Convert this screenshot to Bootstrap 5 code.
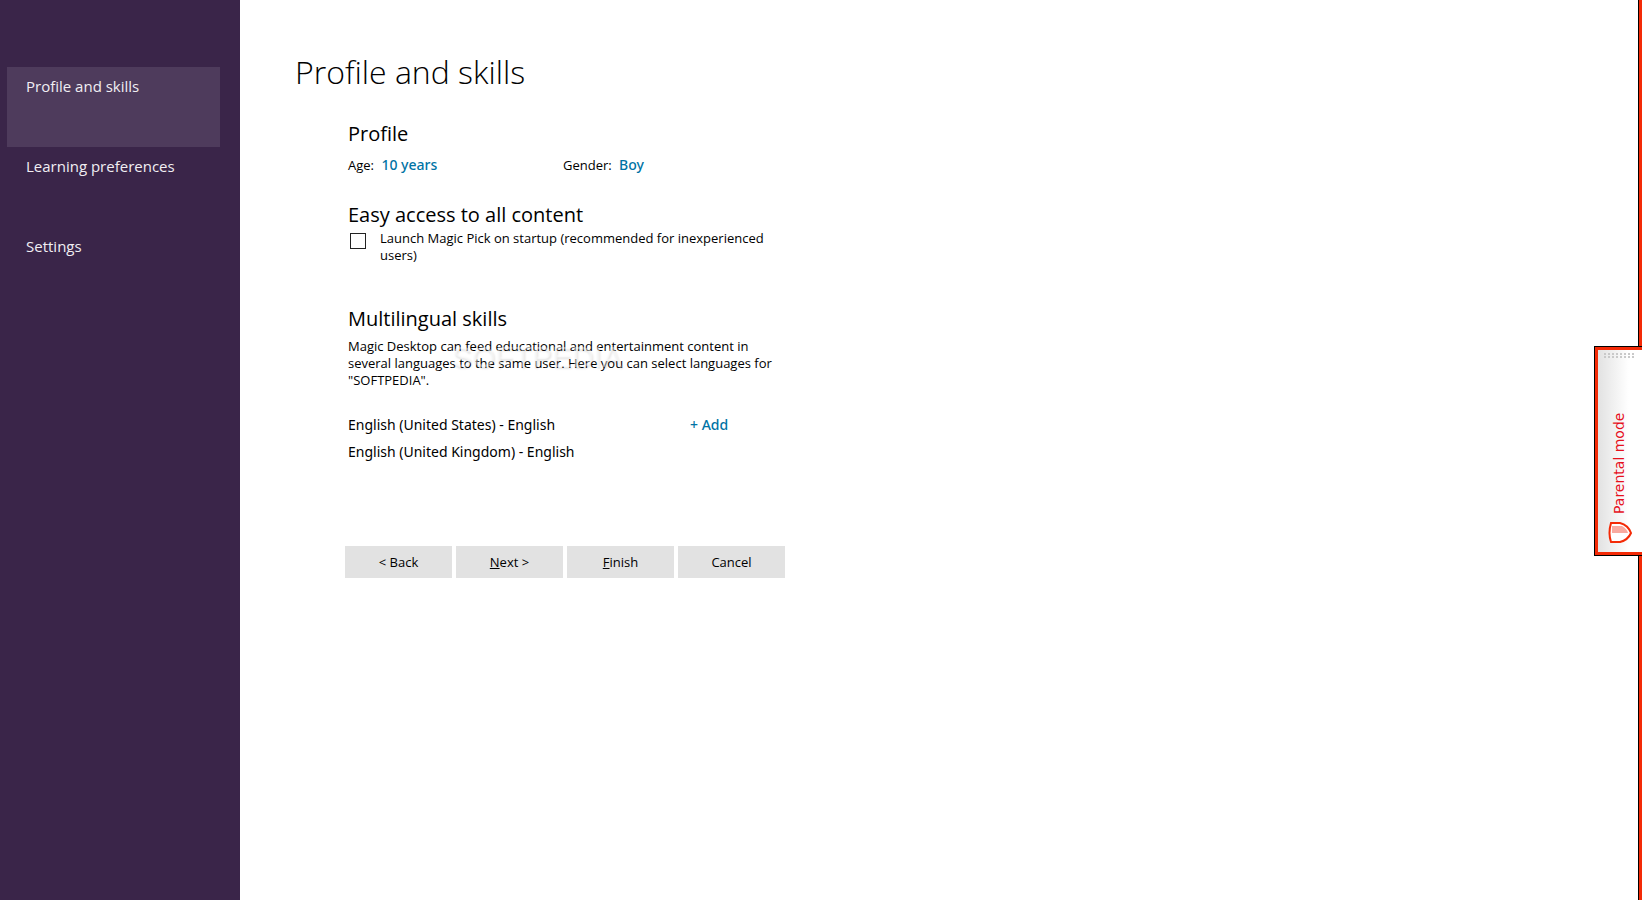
<!DOCTYPE html>
<html lang="en">
<head>
<meta charset="utf-8">
<meta name="viewport" content="width=device-width, initial-scale=1">
<title>Profile and skills</title>
<link href="https://cdn.jsdelivr.net/npm/bootstrap@5.3.0/dist/css/bootstrap.min.css" rel="stylesheet">
<style>
  body { font-family: "Open Sans", "Noto Sans", sans-serif; font-size: 13px; line-height: 17px; color: #000; background: #fff; }
  .side-menu { width: 240px; background: #3a2549; padding: 67px 20px 0 7px; }
  .side-menu .nav-link { height: 80px; padding: 7px 19px; font-size: 15px; line-height: 24px; color: #f1eef3; border-radius: 0; }
  .side-menu .nav-link.active { background: #4e3b5c; color: #f1eef3; }
  .frame-edge { width: 4px; background: #f42a06; border-left: 1px solid #000; }
  .wizard { padding: 48px 0 0 55px; }
  .wizard h1 { font-size: 32px; line-height: 48px; font-weight: 300; color: #000; margin-bottom: 24px; }
  .wizard h2 { font-size: 20px; line-height: 28px; font-weight: 400; margin: 0; }
  .sections { max-width: 473px; padding-left: 53px; }
  .profile-row { line-height: 24px; margin: 5px 0 24px; }
  .profile-row > div { flex: none; width: 215px; }
  .action { font-family: "Noto Sans", sans-serif; font-size: 14px; line-height: 24px; font-weight: 500; color: #0073a5; text-decoration: none; }
  .tick { appearance: none; flex: none; width: 16px; height: 16px; border: 1px solid #222; margin: 3px 14px 0 2px; background: #fff; }
  .startup { padding-top: 1px; margin-bottom: 41px; }
  .watermarked { margin: 5px 0 22px; }
  .watermark { left: 104px; top: 7px; font: 30px/24px "Liberation Sans", sans-serif; color: rgba(255,255,255,.45); text-shadow: 1px 2px 2px rgba(0,0,0,.1); pointer-events: none; }
  .languages { font-family: "Noto Sans", sans-serif; font-size: 14px; line-height: 27px; }
  .languages ul { width: 342px; }
  .wizard-buttons { margin-top: 81px; padding-left: 50px; gap: 4px; }
  .wizard-buttons .btn { width: 107px; height: 32px; padding: 0; font-size: 13px; line-height: 32px; color: #000; background: #e2e2e2; border: 0; border-radius: 0; }
  .parental-tab { right: 0; top: 347px; width: 47px; height: 208px; padding: 0; border: solid #f42a06; border-width: 3px 0 3px 3px; outline: 1px solid #000; background: linear-gradient(90deg, #e2e2e2, #fff 70%); }
</style>
</head>
<body>
<div class="d-flex min-vh-100 position-relative overflow-hidden">
  <nav class="side-menu flex-shrink-0" aria-label="Steps">
    <div class="nav flex-column">
      <a class="nav-link active" href="#profile" aria-current="page">Profile and skills</a>
      <a class="nav-link" href="#learning">Learning preferences</a>
      <a class="nav-link" href="#settings">Settings</a>
    </div>
  </nav>
  <main class="wizard flex-grow-1" id="profile">
    <h1>Profile and skills</h1>
    <div class="sections">
      <section>
        <h2>Profile</h2>
        <div class="profile-row d-flex">
          <div>Age: <a class="action ms-1" href="#age">10 years</a></div>
          <div>Gender: <a class="action ms-1" href="#gender">Boy</a></div>
        </div>
      </section>
      <section>
        <h2>Easy access to all content</h2>
        <div class="startup d-flex text-nowrap">
          <input class="tick" type="checkbox" id="launch">
          <label for="launch">Launch Magic Pick on startup (recommended for inexperienced<br>users)</label>
        </div>
      </section>
      <section>
        <h2>Multilingual skills</h2>
        <div class="watermarked position-relative text-nowrap">Magic Desktop can feed educational and entertainment content in<br>several languages to the same user. Here you can select languages for<br>"SOFTPEDIA".
          <span class="watermark position-absolute" aria-hidden="true">SOFTPEDIA</span>
        </div>
        <div class="languages d-flex align-items-baseline">
          <ul class="list-unstyled mb-0">
            <li>English (United States) - English</li>
            <li>English (United Kingdom) - English</li>
          </ul>
          <a class="action" href="#add">+ Add</a>
        </div>
      </section>
    </div>
    <div class="wizard-buttons d-flex">
      <button type="button" class="btn">&lt; Back</button>
      <button type="button" class="btn"><u>N</u>ext &gt;</button>
      <button type="button" class="btn"><u>F</u>inish</button>
      <button type="button" class="btn">Cancel</button>
    </div>
  </main>
  <div class="frame-edge flex-shrink-0"></div>
  <button type="button" class="parental-tab position-absolute" aria-label="Parental mode">
    <svg class="d-block" width="44" height="202" viewBox="0 0 44 202" aria-hidden="true">
      <g stroke="#c9c9c9" stroke-width="2" stroke-dasharray="2 2">
        <path d="M6 4H36M6 7H36"/>
      </g>
      <text transform="translate(26 164) rotate(-90)" font-family="DejaVu Sans, sans-serif" font-size="14" fill="#e6101c">Parental mode</text>
      <g transform="translate(-1 -1)">
        <path d="M14 174H23Q31 176 34 184Q31 191 23 193H14Q11 184 14 174Z" fill="#fff" stroke="#f42a06" stroke-width="2"/>
        <path d="M15 177H25Q30 180 31 184H15Z" fill="#f9aaa0"/>
      </g>
    </svg>
  </button>
</div>
<script src="https://cdn.jsdelivr.net/npm/bootstrap@5.3.0/dist/js/bootstrap.bundle.min.js"></script>
</body>
</html>
